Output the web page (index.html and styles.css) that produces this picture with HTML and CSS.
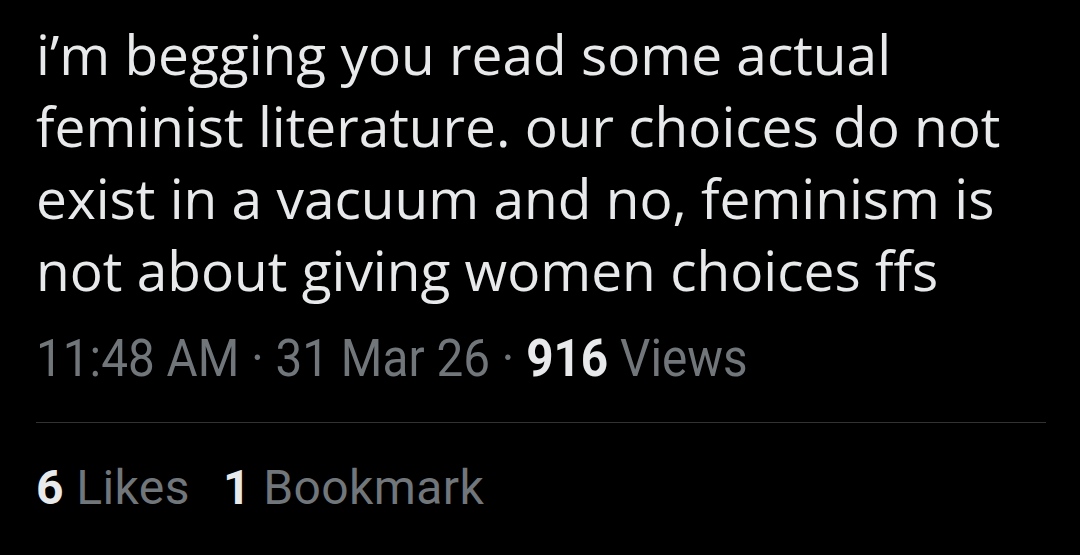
FILE: index.html
```html
<!DOCTYPE html>
<html>
<head>
<meta charset="utf-8">
<link rel="stylesheet" href="styles.css">
</head>
<body>
<article class="tweet">
  <p class="body">i’m begging you read some actual feminist literature. our choices do not exist in a vacuum and no, feminism is not about giving women choices ffs</p>
  <div class="meta"><span class="meta-inner">11:48 AM · 31 Mar 26 · <b>916</b> Views</span></div>
  <div class="divider"></div>
  <div class="stats">
    <span class="stat"><b>6</b> Likes</span>
    <span class="stat"><b>1</b> Bookmark</span>
  </div>
</article>
</body>
</html>
```
FILE: styles.css
```css
html, body {
  margin: 0;
  padding: 0;
  background: #000;
  width: 1080px;
  height: 555px;
  overflow: hidden;
}
.tweet {
  padding: 18px 34px 0 36px;
}
.body {
  margin: 0;
  width: 990px;
  font-family: "Open Sans", sans-serif;
  font-size: 55px;
  line-height: 72px;
  color: #e7e9ea;
}
.meta {
  margin-top: 23px;
  height: 60px;
  font-family: Roboto, sans-serif;
  font-size: 51px;
  line-height: 60px;
  color: #71767b;
  white-space: nowrap;
}
.meta-inner {
  display: inline-block;
  transform: scaleX(0.935);
  transform-origin: left center;
}
.meta b { color: #e7e9ea; font-weight: 700; }
.divider {
  margin-top: 33px;
  height: 1px;
  background: #2f3336;
}
.stats {
  display: flex;
  gap: 33px;
  padding-top: 37px;
  font-family: Roboto, sans-serif;
  font-size: 48px;
  letter-spacing: 0.4px;
  line-height: 56px;
  color: #71767b;
}
.stats b { color: #e7e9ea; font-weight: 700; }
```
